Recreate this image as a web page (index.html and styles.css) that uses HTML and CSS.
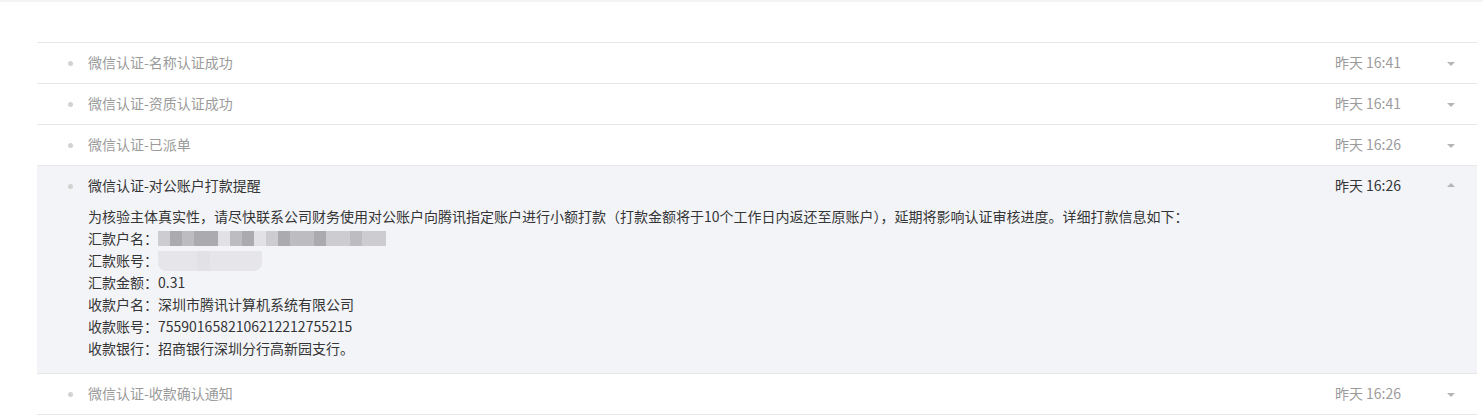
FILE: index.html
```html
<!DOCTYPE html>
<html lang="zh-CN">
<head>
    <meta charset="UTF-8">
    <meta name="viewport" content="width=device-width, initial-scale=1.0">
    <title>消息通知</title>
    <link rel="stylesheet" href="styles.css">
</head>
<body>
    <div class="topbar"></div>
    <div class="msg-list">
        <div class="msg">
            <div class="msg-head">
                <span class="dot"></span>
                <span class="msg-title">微信认证-名称认证成功</span>
                <span class="msg-time">昨天 16:41</span>
                <span class="caret down"></span>
            </div>
        </div>
        <div class="msg">
            <div class="msg-head">
                <span class="dot"></span>
                <span class="msg-title">微信认证-资质认证成功</span>
                <span class="msg-time">昨天 16:41</span>
                <span class="caret down"></span>
            </div>
        </div>
        <div class="msg">
            <div class="msg-head">
                <span class="dot"></span>
                <span class="msg-title">微信认证-已派单</span>
                <span class="msg-time">昨天 16:26</span>
                <span class="caret down"></span>
            </div>
        </div>
        <div class="msg open">
            <div class="msg-head">
                <span class="dot"></span>
                <span class="msg-title">微信认证-对公账户打款提醒</span>
                <span class="msg-time">昨天 16:26</span>
                <span class="caret up"></span>
            </div>
            <div class="msg-body">
                <p>为核验主体真实性，请尽快联系公司财务使用对公账户向腾讯指定账户进行小额打款（打款金额将于10个工作日内返还至原账户），延期将影响认证审核进度。详细打款信息如下：</p>
                <p class="masked-line">汇款户名：<span class="mosaic wide">
                    <i class="c2"></i><i class="c4"></i><i class="c3"></i><i class="c4"></i><i class="c4"></i><i class="c0"></i><i class="c3"></i><i class="c4"></i><i class="c0"></i><i class="c2"></i><i class="c4"></i><i class="c3"></i><i class="c3"></i><i class="c4"></i><i class="c2"></i><i class="c2"></i><i class="c3"></i><i class="c2"></i><i class="c2"></i>
                </span></p>
                <p class="masked-line">汇款账号：<span class="mosaic narrow">
                    <i class="c1"></i><i class="c1"></i><i class="c1"></i><i class="c0"></i><i class="c1"></i><i class="c1"></i><i class="c1"></i><i class="c1"></i>
                </span></p>
                <p>汇款金额：0.31</p>
                <p>收款户名：深圳市腾讯计算机系统有限公司</p>
                <p>收款账号：7559016582106212212755215</p>
                <p>收款银行：招商银行深圳分行高新园支行。</p>
            </div>
        </div>
        <div class="msg">
            <div class="msg-head">
                <span class="dot"></span>
                <span class="msg-title">微信认证-收款确认通知</span>
                <span class="msg-time">昨天 16:26</span>
                <span class="caret down"></span>
            </div>
        </div>
    </div>
</body>
</html>
```

FILE: styles.css
```css
body {
    margin: 0;
    padding: 0;
    background-color: #ffffff;
    font-family: "Noto Sans CJK SC", "Noto Sans", sans-serif;
    font-size: 14px;
    color: #353535;
}

.topbar {
    height: 2px;
    background-color: #f4f4f4;
}

.msg-list {
    width: 1440px;
    margin-left: 37px;
    margin-top: 40px;
    border-top: 1px solid #e7e7e7;
}

.msg {
    border-bottom: 1px solid #e7e7e7;
}

.msg.open {
    background-color: #f3f4f8;
}

.msg-head {
    display: flex;
    align-items: center;
    height: 40px;
    padding-left: 31px;
    padding-right: 22px;
    padding-bottom: 2px;
    box-sizing: border-box;
}

.dot {
    width: 5px;
    height: 5px;
    border-radius: 50%;
    background-color: #d2d2d2;
    margin-right: 15px;
    margin-top: 2px;
}

.msg-title {
    flex: 1;
    color: #9b9b9b;
}

.msg-time {
    color: #9b9b9b;
    margin-right: 46px;
    margin-left: -2px;
}

.open .msg-title,
.open .msg-time {
    color: #353535;
}

.caret {
    width: 0;
    height: 0;
    border-left: 4px solid transparent;
    border-right: 4px solid transparent;
}

.caret.down {
    border-top: 4px solid #b5b5b5;
    margin-top: 4px;
}

.caret.up {
    border-bottom: 4px solid #b5b5b5;
}

.msg-body {
    padding: 0 0 13px 88px;
    margin-left: -37px;
}

.msg-body p {
    margin: 0;
    line-height: 22px;
    position: relative;
    top: -1px;
}

.masked-line {
    display: flex;
    align-items: center;
}

.mosaic {
    display: inline-flex;
    height: 15px;
}

.mosaic i {
    display: block;
    width: 12px;
    height: 100%;
}

.mosaic.narrow {
    height: 20px;
    margin-top: 2px;
    border-radius: 0 0 8px 8px;
    overflow: hidden;
}

.mosaic.narrow i {
    width: 13px;
}

.mosaic .c0 { background-color: #e1e1e6; }
.mosaic .c1 { background-color: #e6e6ea; }
.mosaic .c2 { background-color: #cdcdd1; }
.mosaic .c3 { background-color: #bdbdc1; }
.mosaic .c4 { background-color: #ababaf; }
```
